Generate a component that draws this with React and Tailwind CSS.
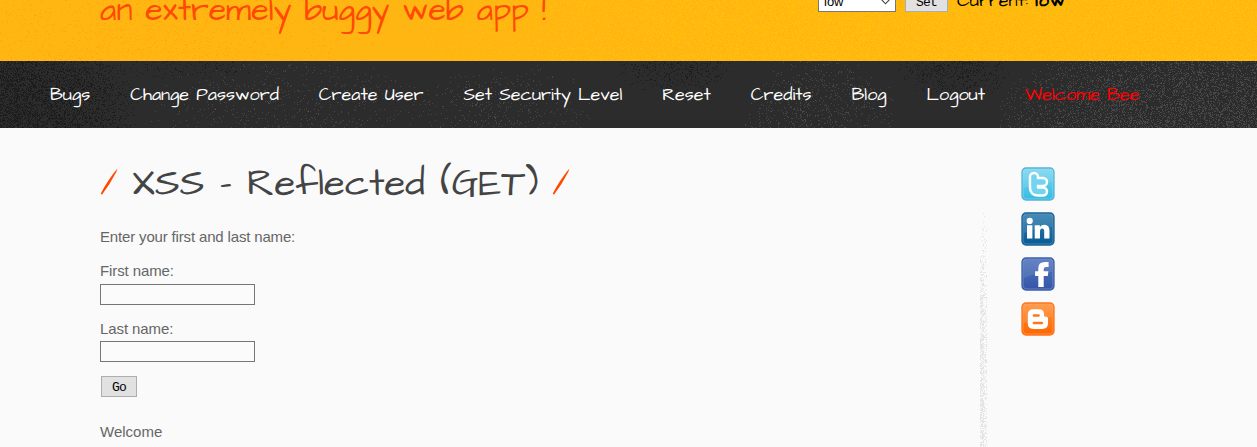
import React from "react";

function random(seed) {
  let s = seed;
  return () => {
    s = (s * 1664525 + 1013904223) % 4294967296;
    return s / 4294967296;
  };
}

// Pixel grain whose density at a point is given by a function of x and y.
function grain(width, height, count, seed, density) {
  const next = random(seed);
  let d = "";
  for (let i = 0; i < count; i++) {
    const x = Math.floor(next() * width);
    const y = Math.floor(next() * height);
    if (next() < density(x, y)) d += `M${x} ${y}h1v1h-1z`;
  }
  return d;
}

const blob = (x, y, cx, cy, rx, ry) => Math.max(0, 1 - ((x - cx) / rx) ** 2 - ((y - cy) / ry) ** 2);

const navDark = grain(1257, 67, 60000, 7, (x, y) =>
  Math.max(0.9 * blob(x, y, 0, 45, 140, 90), 0.25 * blob(x, y, 675, 5, 60, 30), 0.3 * blob(x, y, 955, 5, 60, 35), 0.15 * blob(x, y, 180, 0, 90, 20)));
const navLight = grain(1257, 67, 50000, 19, (x, y) =>
  Math.max(0.08 * blob(x, y, 290, 45, 150, 60), 0.1 * blob(x, y, 500, 50, 100, 50), 0.2 * blob(x, y, 820, 55, 80, 65), 0.6 * blob(x, y, 1210, 60, 220, 100)));
const headDark = grain(1257, 61, 12000, 31, (x, y) => 0.45 * blob(x, y, 130, 45, 260, 70));
const headLight = grain(1257, 61, 70000, 43, (x) => (x > 400 ? Math.min(0.6, (x - 400) / 700) : 0));
const divider = grain(7, 240, 2600, 57, (x, y) => Math.min(0.9, y / 150) * (x < 4 ? 0.8 : 0.3) * (x > 1 || y > 40 ? 1 : 0.2));

function Grain({ children }) {
  return (
    <svg className="pointer-events-none absolute inset-0 h-full w-full" shapeRendering="crispEdges" aria-hidden="true">
      {children}
    </svg>
  );
}

const nav = ["Bugs", "Change Password", "Create User", "Set Security Level", "Reset", "Credits", "Blog", "Logout", "Welcome Bee"];

function Slash() {
  return (
    <svg className="mt-[6px] shrink-0" width="18" height="29" viewBox="0 0 18 29" fill="#ff4800">
      <path d="M.8 25.5Q7 13 17.4 .4L16.3 4Q9.5 17 2 26.8Z" />
    </svg>
  );
}

function Social({ name, top, bottom, edge, children }) {
  return (
    <a href="#" aria-label={name} className="block h-[34px] w-[34px]">
      <svg width="34" height="34" viewBox="0 0 34 34">
        <defs>
          <linearGradient id={name} x1="0" y1="0" x2="0" y2="1">
            <stop offset="0" stopColor={top} />
            <stop offset="1" stopColor={bottom} />
          </linearGradient>
        </defs>
        <rect x="1" y="1" width="32" height="32" rx="4" fill={`url(#${name})`} stroke={edge} strokeWidth="1.3" />
        <rect x="2.2" y="2.2" width="29.6" height="29.6" rx="3" fill="none" stroke="#fff" strokeOpacity=".2" />
        <path d="M3 3H31V15Q17 15 3 21Z" fill="#fff" fillOpacity=".1" />
        {children}
      </svg>
    </a>
  );
}

export default function App() {
  return (
    <div className="h-[447px] w-full overflow-hidden bg-[#fafafa] font-['Liberation_Sans',sans-serif] text-[15px] text-[#666]">
      <header className="relative h-[61px] overflow-hidden bg-[#ffb613]">
        <Grain>
          <path d={headDark} fill="#ffa60b" />
          <path d={headLight} fill="#ffbf0b" />
        </Grain>
        <div className="relative flex items-start pl-[100px] font-['Architects_Daughter',Lato,sans-serif] whitespace-nowrap">
          <p className="-mt-[9px] w-[447px] shrink-0 text-[32.2px] leading-[40px] text-[#ff4800]">an extremely buggy web app !</p>
          <div className="-mt-[9px] ml-[271px] flex h-[21px] w-[78px] shrink-0 items-center justify-between border border-[#777] bg-white px-[5px] font-['Liberation_Sans',sans-serif] text-[13px] text-black">
            <span>low</span>
            <svg width="9" height="6" viewBox="0 0 9 6" fill="none" stroke="#444" strokeWidth="1.1">
              <path d="M.7 .8L4.5 4.8L8.3 .8" />
            </svg>
          </div>
          <button className="-mt-[9px] ml-[9px] h-[21px] w-[43px] shrink-0 border border-[#adadad] bg-[#e1e1e1] font-['Liberation_Mono',monospace] text-[13px] leading-[21px] tracking-[-0.8px] text-black">Set</button>
          <p className="-mt-[11px] ml-[9px] text-[18px] leading-[24px] text-black">
            Current: <b className="tracking-[1px]">low</b>
          </p>
        </div>
      </header>

      <nav className="relative h-[67px] overflow-hidden bg-[#2c2c2c]">
        <Grain>
          <path d={navDark} fill="#1c1c1c" />
          <path d={navLight} fill="#474747" />
        </Grain>
        <div className="relative flex h-[67px] items-center gap-[40px] pl-[50px] font-['Architects_Daughter',Lato,sans-serif] text-[18px] leading-[25px] whitespace-nowrap text-white">
          {nav.map((label) => (
            <a key={label} href="#" className="last:text-[#ff0000]">{label}</a>
          ))}
        </div>
      </nav>

      <div className="flex h-[319px]">
        <main className="w-[880px] shrink-0 pl-[100px]">
          <h1 className="flex pt-[34px] font-['Architects_Daughter',Lato,sans-serif] text-[38.4px] leading-[44px] whitespace-nowrap text-[#444]">
            <Slash />
            <span className="mr-[15px] ml-[14px] w-[405px]">XSS - Reflected (GET)</span>
            <Slash />
          </h1>
          <p className="mt-[21px] leading-[20px] tracking-[-0.16px]">Enter your first and last name:</p>
          <form onSubmit={(e) => e.preventDefault()}>
            <label className="mt-[14px] block leading-[20px] tracking-[-0.1px]" htmlFor="first">First name:</label>
            <input id="first" className="mt-[3px] block h-[21px] w-[155px] border border-[#767676] bg-white/30 px-1" />
            <label className="mt-[14px] block leading-[20px] tracking-[-0.1px]" htmlFor="last">Last name:</label>
            <input id="last" className="mt-[2px] block h-[21px] w-[155px] border border-[#767676] bg-white/30 px-1" />
            <button className="mt-[14px] ml-px block h-[21px] w-[36px] border border-[#adadad] bg-[#e1e1e1] font-['Liberation_Mono',monospace] text-[13px] leading-[21px] tracking-[-0.8px] text-black">Go</button>
          </form>
          <p className="mt-[25px] leading-[20px]">Welcome</p>
        </main>
        <div className="ml-[100px] w-[8px] shrink-0 pt-[79px]">
          <svg width="8" height="240" shapeRendering="crispEdges" aria-hidden="true">
            <path d={divider} fill="#e6e4e6" />
          </svg>
        </div>
        <aside className="ml-[33px] flex flex-col gap-[11px] pt-[39px]">
          <Social name="twitter" top="#7fd6ef" bottom="#35bce4" edge="#55b4d5">
            <path d="M13 10V20.5Q13 24.5 17 24.5H22M13 15H22" fill="none" stroke="#fff" strokeWidth="10.5" strokeLinecap="round" strokeLinejoin="round" />
            <path d="M13 10V20.5Q13 24.5 17 24.5H22M13 15H22" fill="none" stroke="#74d4ef" strokeWidth="5.6" strokeLinecap="round" strokeLinejoin="round" />
          </Social>
          <Social name="linkedin" top="#347eaf" bottom="#075b94" edge="#1a6397">
            <g fill="#fff">
              <circle cx="8.7" cy="8.9" r="3.1" />
              <path d="M6 13.2h5.4v13.3H6zM13.7 13.2h5.2v1.9q1.5-2.3 4.4-2.3 5.2 0 5.2 6v7.7h-5.3v-7q0-3-2-3-2.2 0-2.2 3v7h-5.3z" />
            </g>
          </Social>
          <Social name="facebook" top="#5376bd" bottom="#3556a8" edge="#3d60aa">
            <path d="M17.3 30V19h-3.2v-4.7h3.2v-2.9q0-6.3 6.6-6.3h3.7v4.8h-2.5q-2.4 0-2.4 2.3v2.1h4.7L26.8 19h-4.1v11z" fill="#fff" />
          </Social>
          <Social name="blogger" top="#ff923c" bottom="#ff6500" edge="#ff731a">
            <path d="M12.3 7.2h5.5q5.2 0 5.2 5v1.2q0 1.4 1.5 1.4h1q1.5 0 1.5 1.7v4.8q0 5.7-5.8 5.7h-8.8q-5.6 0-5.6-5.7v-8.4q0-5.7 5.5-5.7z" fill="#fff" />
            <path d="M13 13.5h4.5M13 21h7.7" stroke="#ff751c" strokeWidth="2.7" strokeLinecap="round" />
          </Social>
        </aside>
      </div>
    </div>
  );
}
